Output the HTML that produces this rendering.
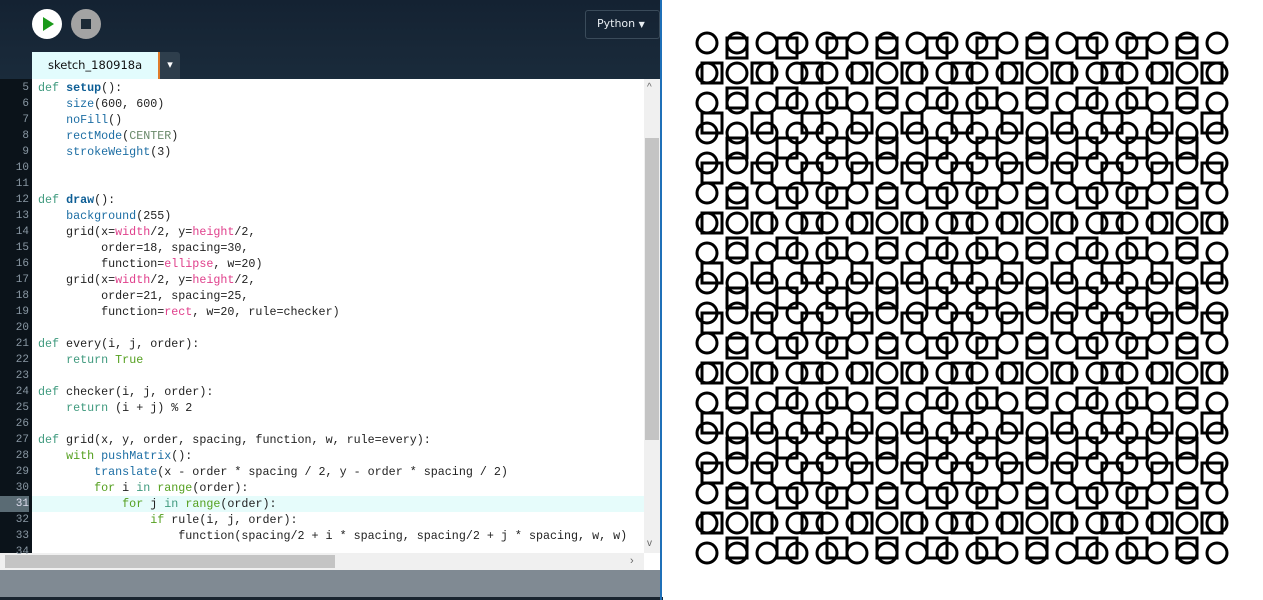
<!DOCTYPE html>
<html><head><meta charset="utf-8"><style>
*{margin:0;padding:0;box-sizing:border-box}
body{width:1263px;height:600px;overflow:hidden;background:#fff;position:relative;font-family:"Liberation Sans",sans-serif}
#hdr{position:absolute;left:0;top:0;width:661px;height:79px;background:linear-gradient(#142232,#1a2b3b)}
.btn{position:absolute;top:9px;width:30px;height:30px;border-radius:50%}
#tab{position:absolute;left:32px;top:52px;width:126px;height:27px;background:#e2fcfd;font-size:11.5px;color:#111;padding:6px 0 0 16px;font-family:"DejaVu Sans",sans-serif}
#tabo{position:absolute;left:158px;top:52px;width:2px;height:27px;background:#e07b2a}
#dd{position:absolute;left:160px;top:52px;width:20px;height:27px;background:#2e3e4c;color:#fff;font-size:11px;text-align:center;padding-top:6px;border-radius:0 3px 0 0}
#py{position:absolute;left:585px;top:10px;width:75px;height:29px;border:1px solid #3a4b5a;border-radius:3px;color:#e8eef2;font-size:11px;padding:6px 0 0 11px;font-family:"DejaVu Sans",sans-serif}
#gut{position:absolute;left:0;top:79px;width:32px;height:474px;background:#0b131a}
#ed{position:absolute;left:32px;top:79px;width:612px;height:474px;background:#fff;overflow:hidden}
.ln{position:absolute;left:0;width:29px;text-align:right;font:11px "Liberation Mono",monospace;color:#8a98a4;height:16px;line-height:16px}
.cl{position:absolute;left:6px;white-space:pre;font:11.7px "Liberation Mono",monospace;color:#222;height:16px;line-height:16px}
.k{color:#3f9a7e}.g{color:#55a020}.f{color:#1d6ea4}.b{color:#0d5e95;font-weight:bold}.p{color:#e0408c}.c{color:#6a8a6a}
#vs{position:absolute;left:644px;top:79px;width:17px;height:474px;background:#f0f0f0}
#vt{position:absolute;left:645px;top:138px;width:14px;height:302px;background:#c4c4c4}
#hs{position:absolute;left:0;top:553px;width:644px;height:17px;background:#f0f0f0}
#ht{position:absolute;left:5px;top:555px;width:330px;height:13px;background:#c4c4c4}
#bot{position:absolute;left:0;top:570px;width:661px;height:27px;background:#808a93}
#bl{position:absolute;left:0;top:597px;width:663px;height:3px;background:#1a2530}
#sep{position:absolute;left:660px;top:0;width:2px;height:600px;background:#1f70b8}
</style></head><body>
<div id="hdr"></div>
<div class="btn" style="left:32px;background:#fff"><svg width="30" height="30"><polygon points="11,8 22,15 11,22" fill="#1a9a1a"/></svg></div>
<div class="btn" style="left:71px;background:#a3a3a3"><svg width="30" height="30"><rect x="10" y="10" width="10" height="10" fill="#1c2a36"/></svg></div>
<div id="tab">sketch_180918a</div><div id="tabo"></div><div id="dd">▾</div>
<div id="py">Python <span style="font-size:8px">▼</span></div>
<div id="gut"></div>
<div id="ed"></div>
<div id="vs"></div><div id="vt"></div>
<div style="position:absolute;left:647px;top:82px;font-size:10px;color:#666">^</div>
<div style="position:absolute;left:647px;top:538px;font-size:10px;color:#666">v</div>
<div id="hs"></div><div id="ht"></div>
<div style="position:absolute;left:630px;top:555px;font-size:11px;color:#666">›</div>
<div id="bot"></div><div id="bl"></div><div id="sep"></div>
<svg id="cv" style="position:absolute;left:662px;top:-2px" width="600" height="602"></svg>
<script>
var L={5:'<span class=k>def</span> <span class=b>setup</span>():',6:'    <span class=f>size</span>(600, 600)',7:'    <span class=f>noFill</span>()',8:'    <span class=f>rectMode</span>(<span class=c>CENTER</span>)',9:'    <span class=f>strokeWeight</span>(3)',
12:'<span class=k>def</span> <span class=b>draw</span>():',13:'    <span class=f>background</span>(255)',14:'    grid(x=<span class=p>width</span>/2, y=<span class=p>height</span>/2,',15:'         order=18, spacing=30,',16:'         function=<span class=p>ellipse</span>, w=20)',17:'    grid(x=<span class=p>width</span>/2, y=<span class=p>height</span>/2,',18:'         order=21, spacing=25,',19:'         function=<span class=p>rect</span>, w=20, rule=checker)',
21:'<span class=k>def</span> every(i, j, order):',22:'    <span class=k>return</span> <span class=g>True</span>',24:'<span class=k>def</span> checker(i, j, order):',25:'    <span class=k>return</span> (i + j) % 2',
27:'<span class=k>def</span> grid(x, y, order, spacing, function, w, rule=every):',28:'    <span class=g>with</span> <span class=f>pushMatrix</span>():',29:'        <span class=f>translate</span>(x - order * spacing / 2, y - order * spacing / 2)',30:'        <span class=g>for</span> i <span class=k>in</span> <span class=g>range</span>(order):',31:'            <span class=g>for</span> j <span class=k>in</span> <span class=g>range</span>(order):',32:'                <span class=g>if</span> rule(i, j, order):',33:'                    function(spacing/2 + i * spacing, spacing/2 + j * spacing, w, w)',34:''};
var ed=document.getElementById('ed'),g='',e='';
for(var n=5;n<=34;n++){var t=80+(n-5)*16;
g+='<div class=ln style="top:'+t+'px;'+(n==31?'background:#5a6b74;color:#dde':'')+'">'+n+'</div>';
e+=(n==31?'<div style="position:absolute;left:0;top:'+(t-79)+'px;width:612px;height:16px;background:#e6fcfb"></div>':'')+'<div class=cl style="top:'+(t-79)+'px">'+(L[n]||'')+'</div>';}
ed.innerHTML=e;
document.body.insertAdjacentHTML('beforeend',g);
var s='<g fill="none" stroke="#000" stroke-width="3">';
for(var i=0;i<18;i++)for(var j=0;j<18;j++)s+='<circle cx="'+(45+i*30)+'" cy="'+(45+j*30)+'" r="10"/>';
for(var i=0;i<21;i++)for(var j=0;j<21;j++)if((i+j)%2)s+='<rect x="'+(40+i*25)+'" y="'+(40+j*25)+'" width="20" height="20"/>';
document.getElementById('cv').innerHTML=s+'</g>';
</script>
</body></html>
